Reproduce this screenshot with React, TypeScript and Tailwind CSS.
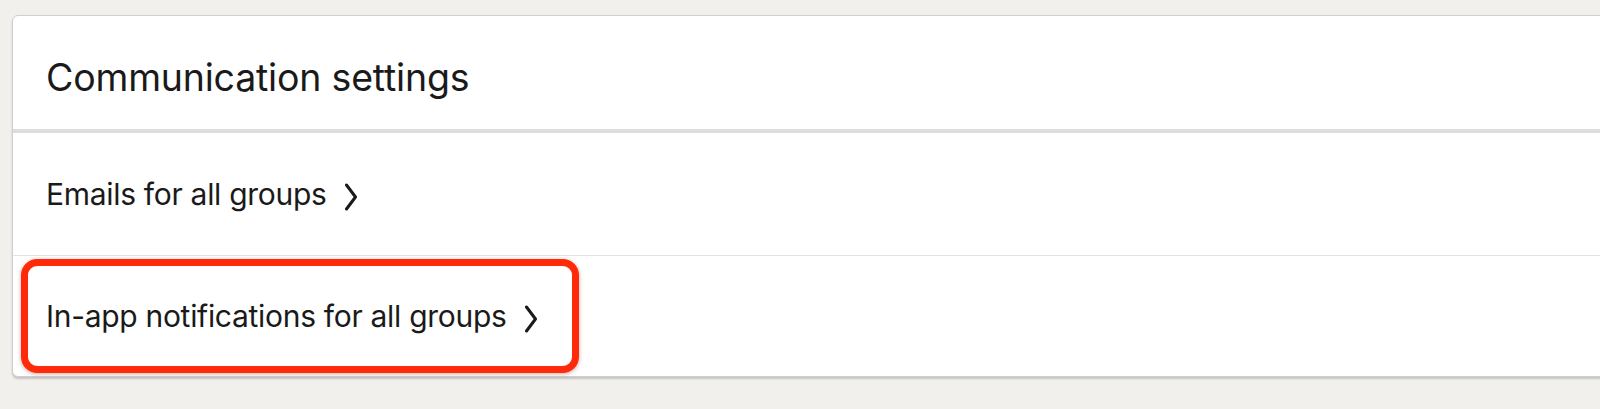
import React from "react";

function Chevron() {
  return (
    <svg width="14" height="28" viewBox="0 0 14 28" className="shrink-0">
      <polyline points="2.5,2 11.5,14 2.5,26" fill="none" stroke="#1a1a1a" strokeWidth="3" strokeLinecap="round" strokeLinejoin="round" />
    </svg>
  );
}

export default function App() {
  return (
    <div className="w-[1600px] h-[409px] overflow-hidden bg-[#f1f0ed] pt-[15px] pl-[12px]" style={{ fontFamily: "Inter, 'Noto Sans', sans-serif" }}>
      <div className="w-[1640px] bg-white border border-[#cfcfcf] rounded-[6px] shadow-[0_2px_2px_rgba(0,0,0,0.18)] text-[#1a1a1a]">
        <div className="h-[117px] border-b-4 border-[#dddddd] flex items-center pl-[33px] pt-[12px]">
          <span className="text-[37.5px] tracking-[-0.2px]">Communication settings</span>
        </div>
        <div className="h-[123px] border-b border-[#e2e2e2] flex items-center pl-[33px] pt-[1px]">
          <span className="text-[30px] tracking-[-0.3px]">Emails for all groups</span>
          <span className="ml-[17px] mt-[4px]"><Chevron /></span>
        </div>
        <div className="relative h-[120px] flex items-center pl-[33px] pt-[1px]">
          <span className="text-[30px] tracking-[-0.3px]">In-app notifications for all groups</span>
          <span className="ml-[17px] mt-[4px]"><Chevron /></span>
          <div className="absolute left-[8px] top-[3px] w-[558px] h-[114px] rounded-[16px] border-[7px] border-[#ff2a0a] shadow-[0_1px_4px_rgba(120,20,0,0.35)]" />
        </div>
      </div>
    </div>
  );
}
